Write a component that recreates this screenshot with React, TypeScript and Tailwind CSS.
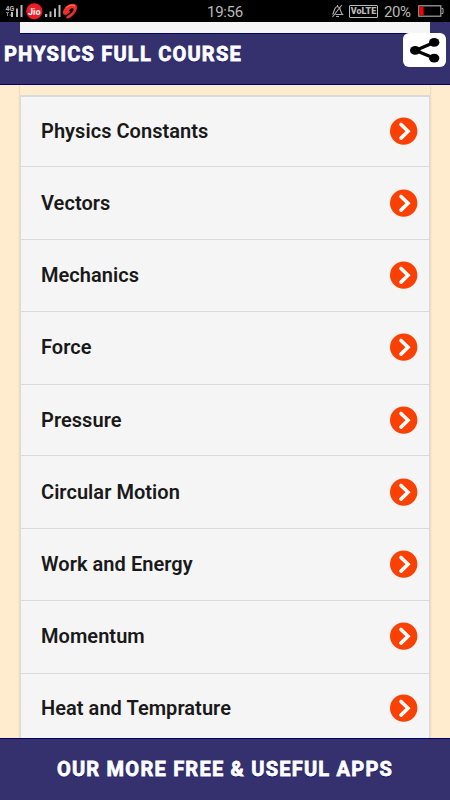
const topics = [
  { name: 'Physics Constants', height: 'h-[71px]', shift: 'pt-0' },
  { name: 'Vectors', height: 'h-[73px]', shift: 'pb-[1px]' },
  { name: 'Mechanics', height: 'h-[72px]', shift: 'pb-[2px]' },
  { name: 'Force', height: 'h-[73px]', shift: 'pb-[2px]' },
  { name: 'Pressure', height: 'h-[71px]', shift: 'pt-0' },
  { name: 'Circular Motion', height: 'h-[73px]', shift: 'pb-[1px]' },
  { name: 'Work and Energy', height: 'h-[72px]', shift: 'pb-[2px]' },
  { name: 'Momentum', height: 'h-[73px]', shift: 'pb-[2px]' },
  { name: 'Heat and Temprature', height: 'h-[72px]', shift: 'pb-[4px]' },
];

function LeftStatus() {
  return (
    <svg width="80" height="22" viewBox="0 0 80 22" className="shrink-0">
      <text x="5.5" y="10.5" fontSize="7" fontWeight="700" fill="#b5b5b5" fontFamily="Roboto, sans-serif">4G</text>
      <path d="M6 12.500h3M7.500 12v4M9.500 15h1.500" stroke="#888" strokeWidth="1" />
      <g fill="#b9b9b9">
        <path d="M11 12h2v5h-2zM16 8.500h2v8.500h-2zM20.500 5h2v12h-2z" />
        <path d="M45 14h2.300v3H45zM49.500 11.500h2v5.500h-2zM54 8.500h2v8.500h-2zM58.500 5h2v12h-2z" />
      </g>
      <circle cx="34.300" cy="11.300" r="8.100" fill="#ef1c24" />
      <text x="34.300" y="14.500" textAnchor="middle" fontSize="9" fontWeight="700" fill="#fff" fontFamily="Roboto, sans-serif">Jio</text>
      <path d="M63 12C64 7 69 3.500 73.500 3.800C78.500 4.500 77.500 10 74.500 13.500C72 16.700 69 18.700 66.500 18.500C65.500 17 67.500 15.800 70 14C73 12 74.500 9.500 73 8.500C71.500 7.700 69.500 9.500 68.500 11.500C70 10.800 71 11 70 12C68.500 13.500 66 15.500 64.500 14.800C63 14.200 62.700 13.200 63 12Z" fill="#ef3029" />
      <path d="M66 8C69 5 73 4.500 75 6" stroke="#ff8b78" strokeWidth="0.800" fill="none" />
    </svg>
  );
}

function BellOff() {
  return (
    <svg width="13" height="14" viewBox="0 0 13 14" fill="none" stroke="#aaa" strokeWidth="1.100">
      <path d="M1.500 10.500C3.500 8 3 3 6.500 2.500C10 3 9 8 11.500 10.500H4.500M5 12.500h3M6.500 1v1.500M1.500 13L10.800 1" />
    </svg>
  );
}

function Battery() {
  return (
    <svg width="26" height="12" viewBox="0 0 26 12">
      <rect x="0.800" y="0.800" width="22" height="10.400" fill="#000" stroke="#a6a6a6" strokeWidth="1.200" />
      <path d="M23.500 3.500h1.500v5h-1.500" fill="none" stroke="#a6a6a6" />
      <path d="M1.600 1.600h4v8.800h-4z" fill="#f90000" />
    </svg>
  );
}

function ShareIcon() {
  return (
    <svg width="30" height="25" viewBox="0 0 30 25">
      <path d="M24.500 4.300L5.500 12.500L24.500 20.300" fill="none" stroke="#000" strokeWidth="3.200" />
      <ellipse cx="5.200" cy="12.400" rx="5.200" ry="4.300" />
      <ellipse cx="24.200" cy="4.400" rx="5.200" ry="4.300" />
      <ellipse cx="24.200" cy="20.100" rx="5.200" ry="4.300" />
    </svg>
  );
}

function ArrowBadge() {
  return (
    <svg width="28" height="28" viewBox="0 0 28 28" className="shrink-0">
      <circle cx="13.700" cy="14.100" r="13.700" fill="#fb4003" />
      <path d="M11 7.500L18 14.300L11 21.100" fill="none" stroke="#fff" strokeWidth="3.600" strokeLinecap="round" />
    </svg>
  );
}

export default function App() {
  return (
    <div className="flex h-[800px] w-[450px] flex-col overflow-hidden bg-[#ffebcd] font-['Roboto',sans-serif]">
      <div className="grid h-[22px] shrink-0 grid-cols-[207px_37px_1fr] items-center bg-black text-[#b9b9b9]">
        <LeftStatus />
        <span className="mt-[2px] text-[15px] leading-[20px] tracking-[-0.3px]">19:56</span>
        <div className="flex h-[22px] items-center pl-[87px]">
          <BellOff />
          <span className="ml-[5px] flex h-[13px] w-[29px] shrink-0 items-center justify-center rounded-[1px] border border-[#b9b9b9] text-[9px] font-black leading-none">VoLTE</span>
          <span className="ml-[6px] mt-[2px] w-[28px] shrink-0 text-[15px] leading-[20px] tracking-[-0.4px]">20%</span>
          <span className="ml-[6px] shrink-0"><Battery /></span>
        </div>
      </div>

      <header className="relative h-[63px] shrink-0 border-b border-[#000066] bg-[#35316e]">
        <div className="ml-5 h-[12px] w-[410px] border-b border-[#000066] bg-[#f5f5f5]" />
        <h1 className="ml-[4px] mt-[7px] whitespace-nowrap text-[20px] font-bold leading-[26px] tracking-[1.220px] text-white [-webkit-text-stroke:0.800px_white] [text-shadow:0_1px_1px_#000066]">PHYSICS FULL COURSE</h1>
        <button aria-label="Share" className="absolute left-[403px] top-[11px] flex h-[34px] w-[43px] items-center justify-center rounded-[6px] bg-white">
          <ShareIcon />
        </button>
      </header>

      <main className="h-[653px] shrink-0 overflow-hidden px-5">
        <div className="h-[653px] pt-[10px] shadow-[0_0_2px_#c9bda9]">
          <ul className="border-x border-t-2 border-[#dadada] bg-[#f5f5f5]">
            {topics.map(({ name, height, shift }, index) => (
              <li key={name} className={`${height} ${shift} ${index === 0 ? '-mt-px' : ''} flex items-center justify-between border-b border-[#dadada] pl-5 pr-[11px]`}>
                <span className="text-[20px] font-semibold leading-[26px] tracking-[0.050px] text-[#191919]">{name}</span>
                <ArrowBadge />
              </li>
            ))}
          </ul>
        </div>
      </main>

      <footer className="flex h-[62px] shrink-0 items-center justify-center border-t border-[#000066] bg-[#35316e] pb-px">
        <span className="whitespace-nowrap text-[20px] font-bold leading-[26px] tracking-[1.240px] text-white [-webkit-text-stroke:0.800px_white] [text-shadow:0_1px_1px_#000066]">OUR MORE FREE &amp; USEFUL APPS</span>
      </footer>
    </div>
  );
}
